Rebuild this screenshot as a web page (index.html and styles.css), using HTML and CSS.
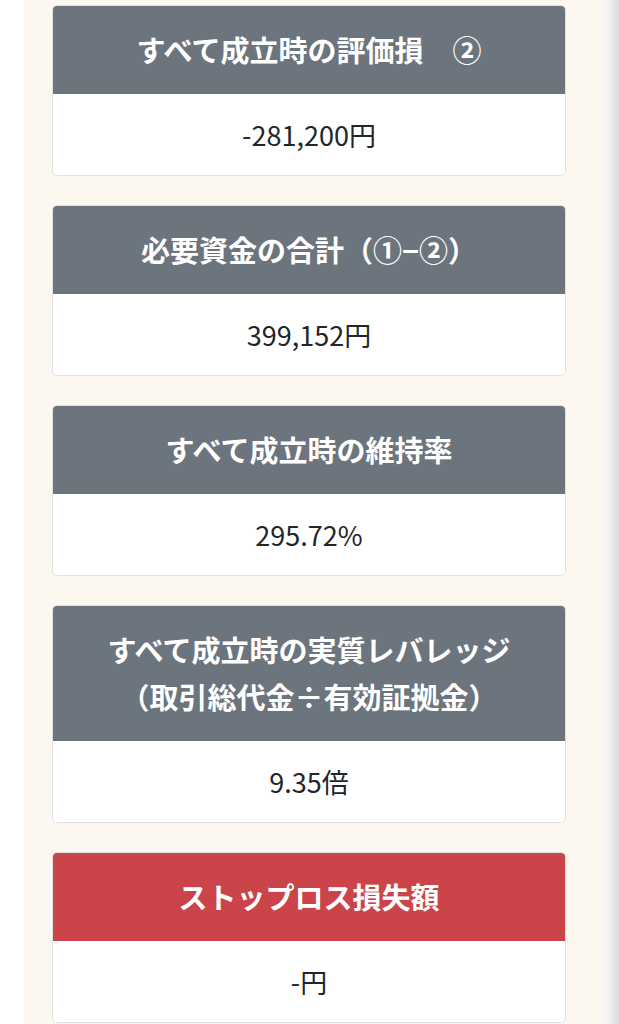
FILE: index.html
```html
<!DOCTYPE html>
<html lang="ja">
<head>
<meta charset="utf-8">
<title>結果</title>
<link rel="stylesheet" href="styles.css">
</head>
<body>
<div class="page">
  <div class="gutter"></div>
  <main class="content">
    <section class="card">
      <div class="card-header">すべて成立時の評価損　②</div>
      <div class="card-body">-281,200円</div>
    </section>
    <section class="card">
      <div class="card-header">必要資金の合計（①−②）</div>
      <div class="card-body">399,152円</div>
    </section>
    <section class="card">
      <div class="card-header">すべて成立時の維持率</div>
      <div class="card-body">295.72%</div>
    </section>
    <section class="card">
      <div class="card-header">すべて成立時の実質レバレッジ<br>（取引総代金÷有効証拠金）</div>
      <div class="card-body">9.35倍</div>
    </section>
    <section class="card">
      <div class="card-header danger">ストップロス損失額</div>
      <div class="card-body">-円</div>
    </section>
  </main>
  <div class="edge"></div>
</div>
</body>
</html>
```
FILE: styles.css
```css
html, body {
  margin: 0;
  padding: 0;
  background: #ffffff;
}
body {
  font-family: "Noto Sans CJK JP", "Noto Sans", sans-serif;
  color: #212529;
}
.page {
  display: flex;
  height: 1024px;
  overflow: hidden;
}
.gutter {
  width: 24px;
  flex: none;
  background: #ffffff;
}
.content {
  flex: 1;
  background: #fdf8ef;
  padding: 5px 35px 0 28px;
  display: flex;
  flex-direction: column;
  gap: 29px;
}
.edge {
  width: 18px;
  flex: none;
  background: linear-gradient(to right, #faf8f4 0%, #f1f1f1 45%, #dadada 100%);
}
.card {
  background: #ffffff;
  border: 1px solid #dfe1e4;
  border-radius: 5px;
  overflow: hidden;
  flex: none;
}
.card-header {
  background: #6c747d;
  color: #ffffff;
  font-weight: 700;
  font-size: 29px;
  line-height: 47px;
  padding: 20px 8px 21px;
  text-align: center;
}
.card-header.danger {
  background: #ca444a;
}
.card-body {
  height: 81px;
  display: flex;
  align-items: center;
  justify-content: center;
  font-size: 27px;
  font-weight: 400;
  color: #222529;
}
```
